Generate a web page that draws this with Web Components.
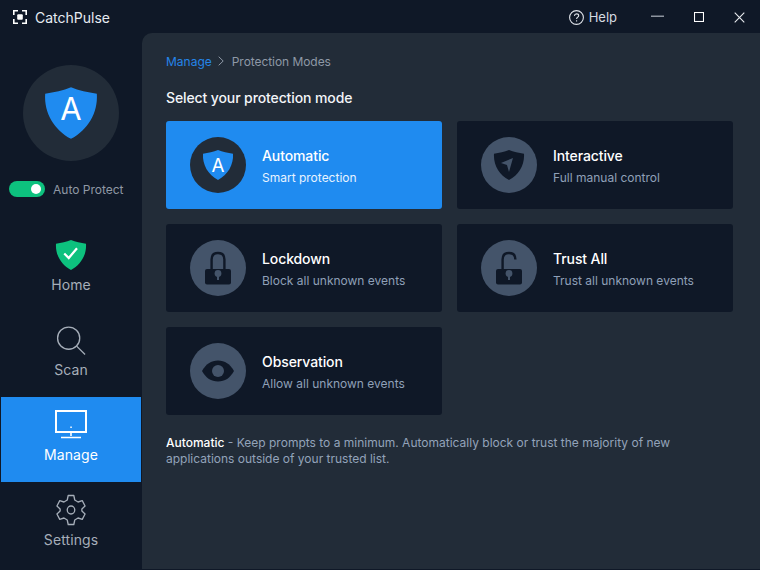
<!DOCTYPE html>
<html>
<head>
<meta charset="utf-8">
<title>CatchPulse</title>
<style>
  html,body{margin:0; padding:0; height:100%; background:#0f1827; overflow:hidden}
  body{font-family:Inter,"Liberation Sans",sans-serif}
</style>
</head>
<body>
<app-window>
  <title-bar slot="top"></title-bar>
  <side-bar slot="side"></side-bar>
  <modes-page></modes-page>
</app-window>

<script>
const SHIELD = 'M24 4 C30 6.5 37 8 44 9 C45 24 37 37 24 44 C11 37 3 24 4 9 C11 8 18 6.5 24 4 Z';

// outer frame: top bar, side bar, panel
class AppWindow extends HTMLElement {
  constructor(){
    super();
    this.attachShadow({mode:'open'});
    this.shadowRoot.innerHTML = `
      <style>
        :host{display:grid; grid-template-columns:142px 1fr; grid-template-rows:33px 536px; width:760px; height:570px}
        .top{grid-column:1 / 3}
        .panel{background:#222c38; border-top-left-radius:10px}
      </style>
      <div class="top"><slot name="top"></slot></div>
      <div><slot name="side"></slot></div>
      <div class="panel"><slot></slot></div>
    `;
  }
}

class TitleBar extends HTMLElement {
  constructor(){
    super();
    this.attachShadow({mode:'open'});
    this.shadowRoot.innerHTML = `
      <style>
        :host{display:flex; align-items:center; height:33px; box-sizing:border-box; padding-top:1px; color:#e6ebf2}
        .logo{display:flex; align-items:center; gap:8px; margin-left:13px; font-size:14px; flex:1}
        svg{display:block}
        .help{display:flex; align-items:center; gap:5px; font-size:13px; color:#d5dae1; margin-right:34px}
        .btns{display:flex; align-items:center; gap:30px; margin-right:15px}
      </style>
      <div class="logo">
        <svg width="14" height="14" viewBox="0 0 14 14"><path d="M0 5V0H5V1.6H1.6V5ZM9 0H14V5H12.4V1.6H9ZM14 9V14H9V12.4H12.4V9ZM5 14H0V9H1.6V12.4H5Z" fill="#fff"/><rect x="4.2" y="4.2" width="5.6" height="5.6" rx="1" fill="#fff"/></svg>
        <span>CatchPulse</span>
      </div>
      <div class="help">
        <svg width="15" height="15" viewBox="0 0 15 15" fill="none" stroke="#e0e4ea" stroke-width="1.1"><circle cx="7.5" cy="7.5" r="6.9"/><path d="M5.4 5.9C5.5 4.6 6.4 3.9 7.6 3.9C8.8 3.9 9.7 4.7 9.7 5.7C9.7 7.2 7.6 7.2 7.6 9"/><path d="M7.6 10.3V11.4"/></svg>
        <span>Help</span>
      </div>
      <div class="btns">
        <svg width="13" height="13" viewBox="0 0 13 13"><rect y="4.5" width="13" height="1.5" fill="#8d949f"/></svg>
        <svg width="10" height="10" viewBox="0 0 10 10" fill="none" stroke="#fff" stroke-width="1.1"><rect x=".5" y=".5" width="9" height="9"/></svg>
        <svg width="11" height="11" viewBox="0 0 11 11" fill="none" stroke="#e8ebef" stroke-width="1.1"><path d="M.7.7L10.3 10.3M10.3.7L.7 10.3"/></svg>
      </div>
    `;
  }
}

class NavItem extends HTMLElement {
  static get observedAttributes(){ return ['label']; }
  constructor(){
    super();
    this.attachShadow({mode:'open'});
    this.shadowRoot.innerHTML = `
      <style>
        :host{display:flex; flex-direction:column; align-items:center; height:85px; box-sizing:border-box; padding-top:10px; color:#a6aeb9; font-size:14px; margin:0 1px}
        :host([active]){background:#1f8bf0; color:#fff}
        .ic{height:36px; display:flex; align-items:center; justify-content:center}
        .lb{margin-top:3px; line-height:18px; letter-spacing:.1px}
      </style>
      <div class="ic"><slot></slot></div>
      <div class="lb" id="lb"></div>
    `;
  }
  connectedCallback(){ this.shadowRoot.getElementById('lb').textContent = this.getAttribute('label') || ''; }
}

class SideBar extends HTMLElement {
  constructor(){
    super();
    this.attachShadow({mode:'open'});
    this.shadowRoot.innerHTML = `
      <style>
        :host{display:flex; flex-direction:column; align-items:stretch; height:536px}
        .badge{width:96px; height:96px; border-radius:50%; background:#222c38; margin:32px auto 0; display:flex; align-items:center; justify-content:center; position:relative}
        .badge span{position:absolute; left:0; right:0; top:25px; text-align:center; color:#fff; font-size:31px; line-height:38px}
        .auto{display:flex; align-items:center; gap:8px; margin:20px 0 0 9px; color:#8f98a5; font-size:12px; height:16px}
        .sw{width:36px; height:16px; border-radius:8px; background:#0dc17e; position:relative}
        .sw i{position:absolute; right:4px; top:3px; width:10px; height:10px; border-radius:50%; background:#fff}
        nav{display:flex; flex-direction:column; margin-top:30px}
        svg{display:block}
      </style>
      <div class="badge">
        <svg width="62" height="62" viewBox="0 0 48 48"><path d="${SHIELD}" fill="#1f8bf0"/></svg>
        <span>A</span>
      </div>
      <div class="auto"><div class="sw"><i></i></div><span>Auto Protect</span></div>
      <nav>
        <nav-item label="Home">
          <svg width="36" height="36" viewBox="0 0 48 48"><path d="${SHIELD}" fill="#0dc17e"/><path d="M15 22L21 28L32 15" fill="none" stroke="#fff" stroke-width="3"/></svg>
        </nav-item>
        <nav-item label="Scan">
          <svg width="30" height="31" viewBox="0 0 32 32" fill="none" stroke="#a6aeb9" stroke-width="1.4"><circle cx="13.5" cy="13.5" r="11.8"/><path d="M22 22L31 31"/></svg>
        </nav-item>
        <nav-item label="Manage" active>
          <svg width="32" height="30" viewBox="0 0 32 30" fill="none" stroke="#fff" stroke-width="2"><rect x="1" y="1" width="30" height="21"/><path d="M16 22V26M6 27.5H26" stroke-width="1.6"/><rect x="15.3" y="16.5" width="1.5" height="1.5" fill="#fff" stroke="none"/></svg>
        </nav-item>
        <nav-item label="Settings">
          <svg width="30" height="32" viewBox="0 0 32 32" preserveAspectRatio="none" fill="none" stroke="#a6aeb9" stroke-width="1.4" stroke-linejoin="round"><circle cx="16" cy="16" r="4"/><path d="M13 1.5H19L20 6L23.5 8L28 6.7L31 12L27.6 15V17L31 20L28 25.3L23.5 24L20 26L19 30.5H13L12 26L8.5 24L4 25.3L1 20L4.4 17V15L1 12L4 6.7L8.5 8L12 6Z"/></svg>
        </nav-item>
      </nav>
    `;
  }
}

class ModeCard extends HTMLElement {
  constructor(){
    super();
    this.attachShadow({mode:'open'});
    this.shadowRoot.innerHTML = `
      <style>
        :host{display:flex; align-items:center; height:88px; box-sizing:border-box; padding-left:24px; background:#0f1827; border-radius:3px; color:#8fa0b8; font-size:12px}
        :host([selected]){background:#1f8bf0; color:#e8f3ff}
        .circle{width:56px; height:56px; border-radius:50%; background:#44546a; display:flex; align-items:center; justify-content:center; flex:none}
        :host([selected]) .circle{background:#222c38}
        .txt{margin-left:16px; padding-top:2px}
        .t{color:#fff; font-size:14px; font-weight:500; line-height:18px; margin-bottom:5px; letter-spacing:-.1px}
        .s{line-height:16px}
      </style>
      <div class="circle"><slot name="icon"></slot></div>
      <div class="txt"><div class="t" id="t"></div><div class="s" id="s"></div></div>
    `;
  }
  connectedCallback(){
    this.shadowRoot.getElementById('t').textContent = this.getAttribute('title-text') || '';
    this.shadowRoot.getElementById('s').textContent = this.getAttribute('sub') || '';
  }
}

const LOCK_BODY = '<rect x="3" y="18" width="26" height="15.5" rx="2" fill="#0f1827"/><circle cx="16" cy="22.5" r="3.4" fill="#44546a"/><rect x="15" y="24" width="2" height="5" fill="#44546a"/>';

class ModesPage extends HTMLElement {
  constructor(){
    super();
    this.attachShadow({mode:'open'});
    this.shadowRoot.innerHTML = `
      <style>
        :host{display:block; padding:20px 27px 0 24px; color:#fff}
        .crumb{display:flex; align-items:center; height:16px; font-size:12px; color:#8e98a6}
        .crumb b{font-weight:400; color:#2585e8}
        .crumb svg{margin:0 8px 0 6px}
        .crumb span{letter-spacing:-.06px}
        h2{margin:19px 0 13px; font-size:14px; line-height:20px; font-weight:500; color:#f3f5f8; letter-spacing:-.11px}
        .grid{display:grid; grid-template-columns:276px 276px; grid-auto-rows:88px; gap:15px}
        .note{margin:20px 0 0; font-size:12px; line-height:15.5px; color:#93a3ba; width:540px}
        .note div{white-space:nowrap}
        .note b{font-weight:500; color:#fff}
        svg{display:block}
      </style>
      <div class="crumb"><b>Manage</b><svg width="6" height="10" viewBox="0 0 6 10" fill="none" stroke="#8e98a6" stroke-width="1"><path d="M.7.7L5.2 5L.7 9.3"/></svg><span>Protection Modes</span></div>
      <h2>Select your protection mode</h2>
      <div class="grid">
        <mode-card selected title-text="Automatic" sub="Smart protection">
          <svg slot="icon" width="36" height="36" viewBox="0 0 48 48"><path d="${SHIELD}" fill="#1f8bf0"/><text x="24" y="33" text-anchor="middle" font-family="Inter,Liberation Sans,sans-serif" font-size="25" fill="#fff">A</text></svg>
        </mode-card>
        <mode-card title-text="Interactive" sub="Full manual control">
          <svg slot="icon" width="36" height="36" viewBox="0 0 48 48"><path d="${SHIELD}" fill="#0f1827"/><path d="M13.3 21.3L29.3 14.7L24 33.3L21.3 24Z" fill="#44546a"/></svg>
        </mode-card>
        <mode-card title-text="Lockdown" sub="Block all unknown events">
          <svg slot="icon" width="32" height="34" viewBox="0 0 32 34"><path d="M9.6 19V8.5C9.6 4 12 2 16 2C20 2 22.4 4 22.4 8.5V19" fill="none" stroke="#0f1827" stroke-width="2.4"/>${LOCK_BODY}</svg>
        </mode-card>
        <mode-card title-text="Trust All" sub="Trust all unknown events">
          <svg slot="icon" width="32" height="34" viewBox="0 0 32 34"><path d="M9.6 19V8.5C9.6 4 12 2 16 2C20 2 22.4 4 22.4 8.5" fill="none" stroke="#0f1827" stroke-width="2.4"/>${LOCK_BODY}</svg>
        </mode-card>
        <mode-card title-text="Observation" sub="Allow all unknown events">
          <svg slot="icon" width="34" height="24" viewBox="0 0 34 24"><path d="M1 12C5 5 10 1.5 17 1.5C24 1.5 29 5 33 12C29 19 24 22.5 17 22.5C10 22.5 5 19 1 12Z" fill="#0f1827"/><circle cx="17" cy="12" r="6" fill="#44546a"/></svg>
        </mode-card>
      </div>
      <div class="note">
        <div><b>Automatic</b><span> - Keep prompts to a minimum. Automatically block or trust the majority of new</span></div>
        <div>applications outside of your trusted list.</div>
      </div>
    `;
  }
}

customElements.define('app-window', AppWindow);
customElements.define('title-bar', TitleBar);
customElements.define('nav-item', NavItem);
customElements.define('side-bar', SideBar);
customElements.define('mode-card', ModeCard);
customElements.define('modes-page', ModesPage);
</script>
</body>
</html>
